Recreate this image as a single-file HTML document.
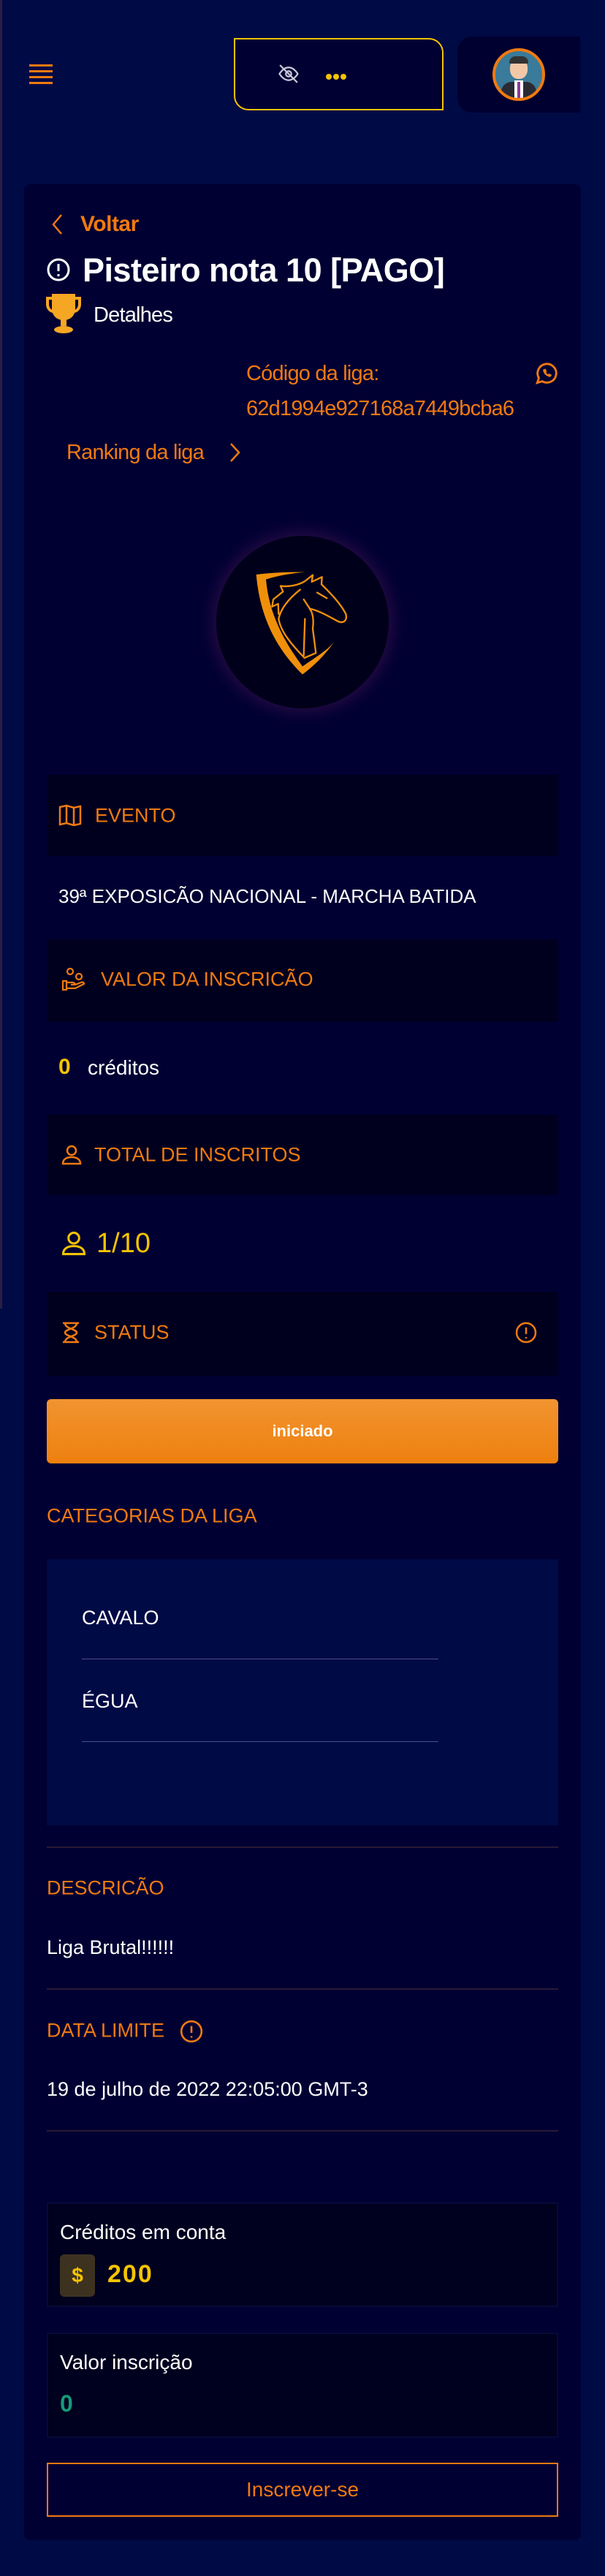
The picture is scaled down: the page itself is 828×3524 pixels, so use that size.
<!DOCTYPE html>
<html><head><meta charset="utf-8"><style>
*{margin:0;padding:0;box-sizing:border-box}
body{width:828px;height:3524px;background:#000a45;font-family:"Liberation Sans",sans-serif;position:relative;overflow:hidden}
.a{position:absolute}
.o{color:#f07a10}
.w{color:#fff}
.lbl{font-size:27px;color:#f07a10;line-height:1;transform:translateY(-50%)}
.box{background:#00001e}
.line{height:2px;background:#2a1a35;left:64px;width:700px}
</style></head><body>
<div class="a" style="left:0;top:0;width:3px;height:1790px;background:#2a2040"></div>
<!-- hamburger -->
<div class="a" style="left:40px;top:88px;width:32px;height:27px">
<div style="height:3px;background:#f07a10;margin-bottom:5px"></div><div style="height:3px;background:#f07a10;margin-bottom:5px"></div><div style="height:3px;background:#f07a10;margin-bottom:5px"></div><div style="height:3px;background:#f07a10"></div></div>
<!-- wallet -->
<div class="a" style="left:320px;top:52px;width:287px;height:99px;border:2px solid #f5c400;border-radius:0 20px 0 20px;background:#000033"></div>
<svg class="a" style="left:378px;top:86px" width="34" height="30" viewBox="0 0 24 24" fill="none" stroke="#c8c8d8" stroke-width="1.8" stroke-linecap="round"><path d="M2 12s4-7 10-7 10 7 10 7-4 7-10 7S2 12 2 12z"/><circle cx="12" cy="12" r="3"/><path d="M3 3l18 18"/></svg>
<div class="a" style="left:446px;top:96px"><span style="display:inline-block;width:8px;height:8px;border-radius:50%;background:#f5c400;margin-right:2px"></span><span style="display:inline-block;width:8px;height:8px;border-radius:50%;background:#f5c400;margin-right:2px"></span><span style="display:inline-block;width:8px;height:8px;border-radius:50%;background:#f5c400"></span></div>
<!-- avatar -->
<div class="a" style="left:626px;top:50px;width:168px;height:104px;background:#000030;border-radius:20px 0 0 20px"></div>
<div class="a" style="left:674px;top:66px;width:72px;height:72px;border-radius:50%;border:4px solid #f07a10;background:#3a7a9a;overflow:hidden">
<div style="position:absolute;left:20px;top:10px;width:24px;height:28px;border-radius:45%;background:#f2c9a8"></div>
<div style="position:absolute;left:19px;top:7px;width:26px;height:10px;border-radius:10px 10px 2px 2px;background:#333"></div>
<div style="position:absolute;left:8px;top:42px;width:48px;height:30px;border-radius:14px 14px 0 0;background:#2a2a35"></div>
<div style="position:absolute;left:26px;top:40px;width:12px;height:30px;background:#fff"></div>
<div style="position:absolute;left:30px;top:42px;width:4px;height:22px;background:#8a3a9a"></div></div>
<!-- card -->
<div class="a" style="left:33px;top:252px;width:762px;height:3223px;background:#000033;border-radius:8px"></div>
<svg class="a" style="left:70px;top:292px" width="16" height="30" viewBox="0 0 16 30" fill="none" stroke="#f07a10" stroke-width="2.5"><path d="M14 2L3 15l11 13"/></svg>
<div class="a o" style="left:110px;top:290px;font-size:30px;font-weight:bold;letter-spacing:-0.5px">Voltar</div>
<svg class="a" style="left:63px;top:352px" width="34" height="34" viewBox="0 0 34 34" fill="none" stroke="#fff" stroke-width="3"><circle cx="17" cy="17" r="14"/><path d="M17 9v10M17 23v3"/></svg>
<div class="a w" style="left:113px;top:344px;font-size:45px;font-weight:bold;letter-spacing:-0.5px">Pisteiro nota 10 [PAGO]</div>
<svg class="a" style="left:63px;top:400px" width="48" height="58" viewBox="0 0 48 58"><path d="M8 2h32v20c0 10-7 16-16 16S8 32 8 22z" fill="#f5a623"/><path d="M8 8H2v8c0 6 4 10 8 10M40 8h6v8c0 6-4 10-8 10" fill="none" stroke="#f5a623" stroke-width="4"/><rect x="20" y="36" width="8" height="10" fill="#f5a623"/><ellipse cx="24" cy="51" rx="13" ry="5" fill="#f5a623"/></svg>
<div class="a w" style="left:128px;top:415px;font-size:29px;letter-spacing:-0.8px">Detalhes</div>
<div class="a o" style="left:337px;top:495px;font-size:29px;letter-spacing:-0.8px">Código da liga:</div>
<div class="a o" style="left:337px;top:543px;font-size:29px;letter-spacing:-0.8px">62d1994e927168a7449bcba6</div>
<svg class="a" style="left:731px;top:494px" width="34" height="34" viewBox="0 0 24 24" fill="none" stroke="#f07a10" stroke-width="2"><path d="M3 21l1.6-4.7A9 9 0 1 1 7.8 19.5z"/><path d="M9 8.5c0 3 3 6 6.5 6.5l1-1.5-2-1-1 .8c-1-.5-2-1.5-2.5-2.5l.8-1-1-2z" fill="#f07a10" stroke-width="0.8"/></svg>
<div class="a o" style="left:91px;top:603px;font-size:29px;letter-spacing:-0.8px">Ranking da liga</div>
<svg class="a" style="left:314px;top:605px" width="16" height="28" viewBox="0 0 16 28" fill="none" stroke="#f07a10" stroke-width="2.5"><path d="M2 2l11 12-11 12"/></svg>
<!-- logo -->
<div class="a" style="left:296px;top:733px;width:236px;height:236px;border-radius:50%;background:#00001a;box-shadow:0 0 22px 6px rgba(70,20,80,0.55)"></div>
<svg class="a" style="left:284px;top:720px" width="260" height="260" viewBox="0 0 780 780">
<path d="M200 198C260 190 330 187 400 188C330 195 280 205 240 218C250 330 290 440 390 575C440 540 490 510 520 475C480 530 440 570 390 608C280 500 215 370 200 198Z" fill="#f0900a"/>
<g fill="none" stroke="#f0900a" stroke-width="7" stroke-linejoin="round" stroke-linecap="round">
<path d="M300 245C340 250 380 238 400 225L432 200L428 228L470 208L468 238C505 275 545 315 568 360C575 385 560 398 540 392C505 375 470 350 420 338L395 300"/>
<path d="M300 245L310 268L270 300L265 330L290 318L292 360"/>
<path d="M380 260C330 300 300 340 292 380C300 430 340 480 398 540L445 520L432 420C438 380 430 350 420 340"/>
<path d="M400 380L395 530"/>
<path d="M450 272L490 295"/>
</g></svg>
<!-- sections -->
<div class="a box" style="left:64px;top:1060px;width:700px;height:111px"></div>
<svg class="a" style="left:80px;top:1100px" width="32" height="30" viewBox="0 0 32 30" fill="none" stroke="#f07a10" stroke-width="2.5"><path d="M2 4l9-2 10 3 9-2v24l-9 2-10-3-9 2z"/><path d="M11 2v24M21 5v24"/></svg>
<div class="a lbl" style="left:130px;top:1116px">EVENTO</div>
<div class="a w" style="left:80px;top:1213px;font-size:26px;line-height:1">39ª EXPOSICÃO NACIONAL - MARCHA BATIDA</div>
<div class="a box" style="left:64px;top:1285px;width:700px;height:113px"></div>
<svg class="a" style="left:84px;top:1322px" width="34" height="34" viewBox="0 0 34 34" fill="none" stroke="#f07a10" stroke-width="2.2"><circle cx="12" cy="7" r="4"/><circle cx="24" cy="14" r="4"/><path d="M2 20h5v12H2zM7 22h8c3 0 4 2 4 3h-6M7 30h12l12-6c0-2-2-3-4-2l-8 3"/></svg>
<div class="a lbl" style="left:138px;top:1340px">VALOR DA INSCRICÃO</div>
<div class="a" style="left:80px;top:1443px;font-size:30px;font-weight:bold;color:#f5c400">0</div>
<div class="a w" style="left:120px;top:1445px;font-size:28px">créditos</div>
<div class="a box" style="left:64px;top:1525px;width:700px;height:110px"></div>
<svg class="a" style="left:84px;top:1566px" width="28" height="28" viewBox="0 0 28 28" fill="none" stroke="#f07a10" stroke-width="2.5"><circle cx="14" cy="8" r="6"/><path d="M2 26c0-6 5-9 12-9s12 3 12 9z"/></svg>
<div class="a lbl" style="left:129px;top:1580px">TOTAL DE INSCRITOS</div>
<svg class="a" style="left:84px;top:1684px" width="34" height="34" viewBox="0 0 28 28" fill="none" stroke="#f5c400" stroke-width="2.5"><circle cx="14" cy="8" r="6"/><path d="M2 26c0-6 5-9 12-9s12 3 12 9z"/></svg>
<div class="a" style="left:132px;top:1680px;font-size:38px;color:#f5c400">1/10</div>
<div class="a box" style="left:64px;top:1767px;width:700px;height:115px"></div>
<svg class="a" style="left:84px;top:1808px" width="26" height="30" viewBox="0 0 26 30" fill="none" stroke="#f07a10" stroke-width="2.5"><path d="M2 2h22M2 28h22M5 2c0 8 16 8 16 13S5 20 5 28M21 2c0 8-16 8-16 13s16 5 16 13"/></svg>
<div class="a lbl" style="left:129px;top:1823px">STATUS</div>
<svg class="a" style="left:704px;top:1807px" width="32" height="32" viewBox="0 0 32 32" fill="none" stroke="#f07a10" stroke-width="2.5"><circle cx="16" cy="16" r="13"/><path d="M16 9v9M16 22v2"/></svg>
<div class="a" style="left:64px;top:1914px;width:700px;height:88px;border-radius:6px;background:linear-gradient(#f19430,#ee800e);color:#fff;font-weight:bold;font-size:22px;text-align:center;line-height:88px">iniciado</div>
<div class="a lbl" style="left:64px;top:2074px">CATEGORIAS DA LIGA</div>
<div class="a" style="left:64px;top:2133px;width:700px;height:364px;background:#000a45"></div>
<div class="a w" style="left:112px;top:2198px;font-size:27px">CAVALO</div>
<div class="a" style="left:112px;top:2269px;width:488px;height:1px;background:#4a5080"></div>
<div class="a w" style="left:112px;top:2312px;font-size:27px">ÉGUA</div>
<div class="a" style="left:112px;top:2382px;width:488px;height:1px;background:#4a5080"></div>
<div class="a line" style="top:2526px"></div>
<div class="a lbl" style="left:64px;top:2583px">DESCRICÃO</div>
<div class="a w" style="left:64px;top:2649px;font-size:27px">Liga Brutal!!!!!!</div>
<div class="a line" style="top:2720px"></div>
<div class="a lbl" style="left:64px;top:2778px">DATA LIMITE</div>
<svg class="a" style="left:245px;top:2762px" width="34" height="34" viewBox="0 0 32 32" fill="none" stroke="#f07a10" stroke-width="2.5"><circle cx="16" cy="16" r="13"/><path d="M16 9v9M16 22v2"/></svg>
<div class="a w" style="left:64px;top:2843px;font-size:27px">19 de julho de 2022 22:05:00 GMT-3</div>
<div class="a line" style="top:2914px"></div>
<div class="a" style="left:64px;top:3013px;width:700px;height:143px;background:#00001f;border:2px solid #060a38"></div>
<div class="a w" style="left:82px;top:3038px;font-size:28px">Créditos em conta</div>
<div class="a" style="left:82px;top:3084px;width:48px;height:58px;border-radius:6px;background:#3d3220;color:#f5c400;font-size:28px;font-weight:bold;text-align:center;line-height:58px">$</div>
<div class="a" style="left:147px;top:3092px;font-size:34px;font-weight:bold;color:#f5c400;letter-spacing:2px">200</div>
<div class="a" style="left:64px;top:3191px;width:700px;height:144px;background:#00001f;border:2px solid #060a38"></div>
<div class="a w" style="left:82px;top:3216px;font-size:28px">Valor inscrição</div>
<div class="a" style="left:82px;top:3270px;font-size:32px;font-weight:bold;color:#169a78">0</div>
<div class="a" style="left:64px;top:3369px;width:700px;height:74px;border:2px solid #f07a10;color:#f07a10;font-size:28px;text-align:center;line-height:70px">Inscrever-se</div>
</body></html>
